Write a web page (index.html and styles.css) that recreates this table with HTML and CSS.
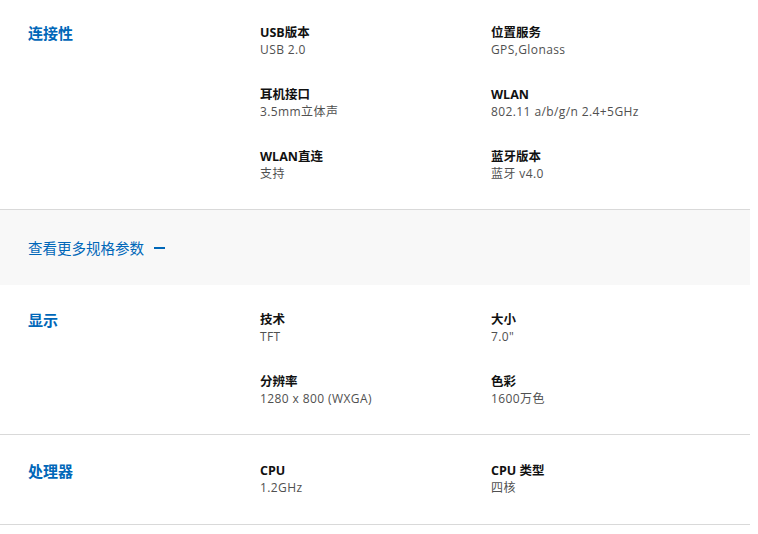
FILE: index.html
```html
<!DOCTYPE html>
<html lang="zh-CN">
<head>
<meta charset="utf-8">
<link rel="stylesheet" href="styles.css">
</head>
<body>
<div class="specs">
  <section class="spec first">
    <h2 class="spec-title">连接性</h2>
    <div class="spec-grid">
      <div class="item"><div class="label">USB版本</div><div class="value">USB 2.0</div></div>
      <div class="item"><div class="label">位置服务</div><div class="value">GPS,Glonass</div></div>
      <div class="item"><div class="label">耳机接口</div><div class="value">3.5mm立体声</div></div>
      <div class="item"><div class="label">WLAN</div><div class="value">802.11 a/b/g/n 2.4+5GHz</div></div>
      <div class="item"><div class="label">WLAN直连</div><div class="value">支持</div></div>
      <div class="item"><div class="label">蓝牙版本</div><div class="value">蓝牙 v4.0</div></div>
    </div>
  </section>
  <div class="more"><span class="more-link">查看更多规格参数</span><span class="dash"></span></div>
  <section class="spec">
    <h2 class="spec-title">显示</h2>
    <div class="spec-grid">
      <div class="item"><div class="label">技术</div><div class="value">TFT</div></div>
      <div class="item"><div class="label">大小</div><div class="value">7.0"</div></div>
      <div class="item"><div class="label">分辨率</div><div class="value">1280 x 800 (WXGA)</div></div>
      <div class="item"><div class="label">色彩</div><div class="value">1600万色</div></div>
    </div>
  </section>
  <section class="spec last">
    <h2 class="spec-title">处理器</h2>
    <div class="spec-grid">
      <div class="item"><div class="label">CPU</div><div class="value">1.2GHz</div></div>
      <div class="item"><div class="label">CPU 类型</div><div class="value">四核</div></div>
    </div>
  </section>
</div>
</body>
</html>
```
FILE: styles.css
```css
html, body {
  margin: 0;
  padding: 0;
  background: #fff;
}
body {
  font-family: "Open Sans", "Noto Sans CJK SC", sans-serif;
  color: #000;
}
.specs {
  width: 750px;
}
.spec {
  display: grid;
  grid-template-columns: 260px 1fr;
  padding: 27px 0 27px 0;
  border-bottom: 1px solid #d9d9d9;
}
.spec.first {
  padding-top: 25px;
  padding-bottom: 27px;
}
.spec.last {
  padding-top: 28px;
  padding-bottom: 28px;
}
.spec-title {
  margin: 0;
  padding-left: 28px;
  font-size: 15px;
  line-height: 16px;
  font-weight: 700;
  color: #0067b8;
}
.spec-grid {
  display: grid;
  grid-template-columns: 231px 1fr;
  row-gap: 29px;
}
.label {
  font-size: 12.5px;
  line-height: 16px;
  font-weight: 700;
  color: #111;
}
.value {
  font-size: 12px;
  line-height: 17px;
  letter-spacing: 0.4px;
  color: #505050;
}
.more {
  height: 75px;
  background: #f8f8f8;
  display: flex;
  align-items: center;
  padding-left: 28px;
}
.more-link {
  font-size: 14.5px;
  color: #0067b8;
}
.dash {
  width: 11px;
  height: 2px;
  background: #0067b8;
  margin-left: 10px;
}
```
